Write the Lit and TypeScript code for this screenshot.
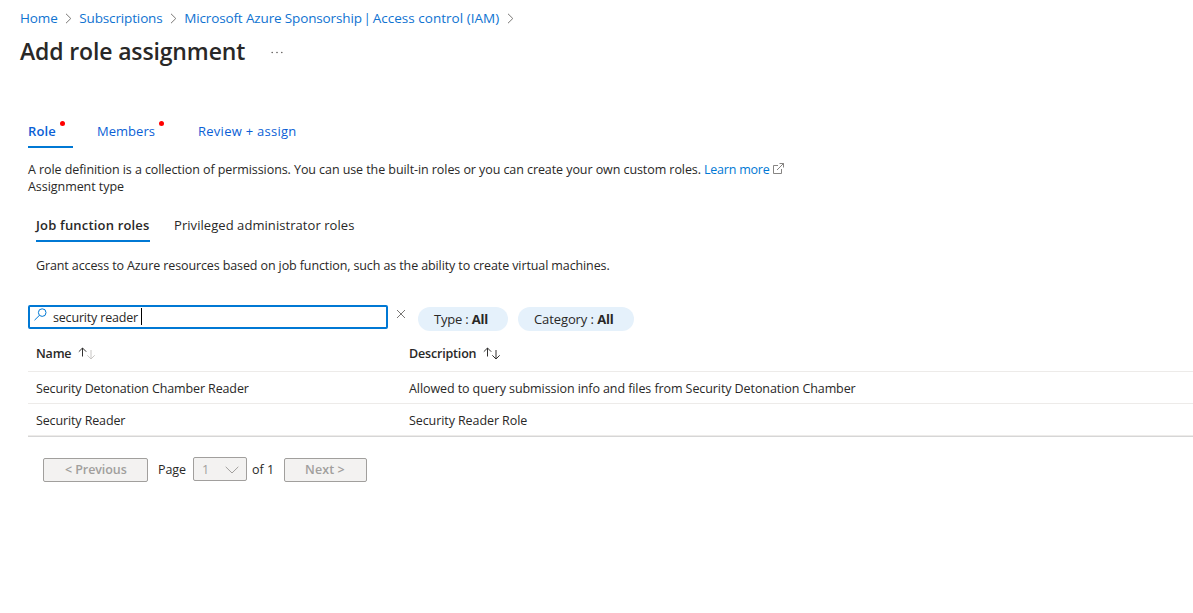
import { LitElement, html, css, svg } from "lit";
import { customElement } from "lit/decorators.js";

const rows = [
  ["Security Detonation Chamber Reader", "Allowed to query submission info and files from Security Detonation Chamber"],
  ["Security Reader", "Security Reader Role"],
];

const chevron = html`<svg class="chev" width="7" height="11" viewBox="0 0 7 11">${svg`<path d="M1 .8 5.8 5.5 1 10.2" />`}</svg>`;

const sort = (down: string) => html`<svg class="sort" width="18" height="13" viewBox="0 0 18 13">
  <path stroke="#323130" d="M4.5 9.5V1M.8 4.7 4.5 1 8.2 4.7" />
  <path stroke=${down} d="M13 3v9M9.3 8.3 13 12 16.7 8.3" />
</svg>`;

@customElement("app-root")
export class AppRoot extends LitElement {
  static styles = css`
    :host { display: block; height: 613px; overflow: hidden; background: #fff; color: #292827;
      font: 12.5px/17px "Open Sans", "Noto Sans", sans-serif; letter-spacing: -.1px; white-space: nowrap; }
    svg { display: block; fill: none; flex: none; }
    .crumbs { display: flex; align-items: center; height: 20px; padding: 8px 0 0 20px; font-size: 13.5px; letter-spacing: -.14px; color: #0f73d1; }
    .bar { margin: 0 -1.6px; }
    .iam { letter-spacing: .03px; }
    .chev { stroke: #797775; margin: 1px 7px 0 7.7px; }
    .head { display: flex; padding-left: 20px; height: 48px; line-height: 46px; }
    h1 { margin: 0; width: 251px; font-size: 23px; letter-spacing: -.14px; font-weight: 600; color: #292827; }
    .dots { margin-top: 23px; fill: #605e5c; }
    .tabs { display: flex; margin: 42px 0 0 28px; height: 30px; color: #0b5fd6; font-size: 13px; letter-spacing: .03px; line-height: 27px; }
    .tab { position: relative; box-sizing: border-box; height: 30px; margin-right: 24px; }
    .tab.on { width: 45px; font-weight: 600; letter-spacing: .1px; border-bottom: 2px solid #0078d4; }
    .tab.mem { width: 77px; }
    .tab.rev { letter-spacing: .26px; }
    .dot { position: absolute; top: 3px; left: 32px; width: 5px; height: 5px; border-radius: 50%; background: #f00; }
    .mem .dot { left: 62px; }
    .intro { display: flex; margin: 13px 0 0 28px; letter-spacing: -.075px; }
    .lead { width: 676px; }
    a { color: #0078d4; }
    .learn { width: 68.5px; letter-spacing: -.22px; }
    .ext { margin-top: 2px; stroke: #797775; stroke-width: .9; }
    .kind { margin-left: 28px; letter-spacing: -.05px; }
    .sub { display: flex; gap: 24px; margin: 14px 0 0 36px; font-size: 13px; letter-spacing: .06px; line-height: 32px; }
    .sub .on { box-sizing: border-box; width: 114px; height: 33px; font-weight: 600; letter-spacing: .18px; border-bottom: 2px solid #0078d4; }
    .grant { margin: 15px 0 0 36px; letter-spacing: -.11px; }
    .tools { display: flex; margin: 31px 0 0 28px; height: 26px; }
    .search { box-sizing: border-box; display: flex; width: 360px; height: 24px; border: 2px solid #0078d4; border-radius: 2px; padding-left: 4px; }
    .glass { stroke: #0078d4; margin-top: 1px; }
    .q { margin-left: 6px; width: 88px; line-height: 21px; letter-spacing: -.18px; }
    .caret { width: 1px; height: 17px; margin-top: 1px; background: #000; }
    .x { margin: 5px 13px 0 9px; stroke: #797775; }
    .pill { box-sizing: border-box; height: 24px; margin: 2px 10px 0 0; padding-left: 16px; border-radius: 12px; background: #e5f1fb; font-size: 13px; line-height: 24px; }
    .type { width: 90px; letter-spacing: -.2px; } .cat { width: 116px; }
    b { font-weight: 700; }
    .table { margin-left: 28px; border-bottom: 1px solid #d6d6d6; }
    .row { display: grid; grid-template-columns: 373px 1fr; box-sizing: border-box; height: 32px; line-height: 33px; padding-left: 8px; border-bottom: 1px solid #edebe9; }
    .row.th { height: 41px; line-height: 35px; padding-top: 5px; font-weight: 600; }
    .n { letter-spacing: -.125px; } .d { letter-spacing: -.085px; }
    .th div { display: flex; }
    .name { width: 42px; letter-spacing: -.2px; } .desc { width: 74px; letter-spacing: -.18px; }
    .sort { margin-top: 11px; }
    .pager { display: flex; align-items: center; margin: 20px 0 0 43px; line-height: 20px; height: 26px; letter-spacing: 0; }
    .btn { box-sizing: border-box; height: 24px; border: 1px solid #a19f9d; border-radius: 2px; background: #f3f2f1; color: #a19f9d; font-weight: 600; line-height: 22px; }
    .prev { width: 105px; padding-left: 21px; margin-right: 10px; letter-spacing: -.08px; }
    .page { width: 35px; letter-spacing: -.1px; }
    .sel { width: 54px; padding-left: 8px; display: flex; font-weight: 400; line-height: 24px; margin: 0 5px 2px 0; }
    .sel svg { margin: 8px 0 0 15.5px; stroke: #a19f9d; }
    .of { width: 32px; }
    .next { width: 83px; padding-left: 20px; letter-spacing: .1px; }
  `;

  render() {
    return html`
      <nav class="crumbs"><span>Home</span>${chevron}<span>Subscriptions</span>${chevron}<span>Microsoft Azure Sponsorship <span class="bar">|</span> <span class="iam">Access control (IAM)</span></span>${chevron}</nav>
      <header class="head"><h1>Add role assignment</h1>
        <svg class="dots" width="12" height="3" viewBox="0 0 12 3"><circle cx="1.2" cy="1.5" r=".8"/><circle cx="6" cy="1.5" r=".8"/><circle cx="10.8" cy="1.5" r=".8"/></svg></header>
      <div class="tabs">
        <div class="tab on">Role<i class="dot"></i></div>
        <div class="tab mem">Members<i class="dot"></i></div>
        <div class="tab rev">Review + assign</div>
      </div>
      <div class="intro"><span class="lead">A role definition is a collection of permissions. You can use the built-in roles or you can create your own custom roles.</span><a class="learn">Learn more</a>
        <svg class="ext" width="11" height="11" viewBox="0 0 11 11"><path d="M5 2.5H.5v8h8V6M6.5.5h4v4M10.5.5 4 7"/></svg></div>
      <div class="kind">Assignment type</div>
      <div class="sub"><div class="on">Job function roles</div><div>Privileged administrator roles</div></div>
      <div class="grant">Grant access to Azure resources based on job function, such as the ability to create virtual machines.</div>
      <div class="tools">
        <div class="search">
          <svg class="glass" width="13" height="13" viewBox="0 0 13 13"><circle cx="8.2" cy="4.6" r="3.8"/><path d="M5.4 7.4.5 12.2"/></svg>
          <span class="q">security reader</span><i class="caret"></i>
        </div>
        <svg class="x" width="8" height="8" viewBox="0 0 8 8"><path d="M0 0l8 8M8 0 0 8"/></svg>
        <div class="pill type">Type : <b>All</b></div>
        <div class="pill cat">Category : <b>All</b></div>
      </div>
      <div class="table">
        <div class="row th"><div><span class="name">Name</span>${sort("#c8c6c4")}</div><div><span class="desc">Description</span>${sort("#323130")}</div></div>
        ${rows.map((r) => html`<div class="row"><span class="n">${r[0]}</span><span class="d">${r[1]}</span></div>`)}
      </div>
      <div class="pager">
        <div class="btn prev">&lt; Previous</div><span class="page">Page</span>
        <div class="btn sel">1<svg width="14" height="8" viewBox="0 0 14 8"><path d="M.7.8 7 7 13.3.8"/></svg></div>
        <span class="of">of 1</span><div class="btn next">Next &gt;</div>
      </div>
    `;
  }
}
